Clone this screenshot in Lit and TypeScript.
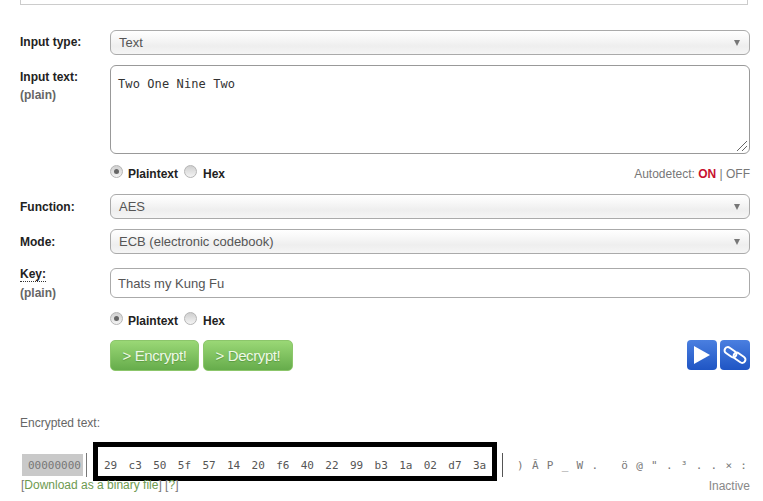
import { LitElement, html, css } from "lit";
import { customElement } from "lit/decorators.js";

const HEX = "29 c3 50 5f 57 14 20 f6 40 22 99 b3 1a 02 d7 3a".split(" ");
const ASCII = [")", "Ã", "P", "_", "W", ".", " ", "ö", "@", "\"", ".", "³", ".", ".", "×", ":"];

@customElement("app-root")
export class AppRoot extends LitElement {
  static styles = css`
    :host { display: block; width: 763px; height: 501px; overflow: hidden; background: #fff;
      font-family: "Liberation Sans", Arial, sans-serif; font-size: 12px; color: #555; }
    .page { padding: 0 13px 0 20px; }
    .topbox { height: 4px; border: 1px solid #ccc; border-top: 0; margin-right: 2px; }
    .row { display: grid; grid-template-columns: 90px 1fr; }
    .label { font-weight: bold; color: #222; font-size: 12px; line-height: 15px; }
    .label small { display: block; font-size: 12px; color: #666; line-height: 15px; margin-top: 3px; }
    .label .key { border-bottom: 1px dotted #333; display: inline-block; line-height: 14px; }
    .pt5 { padding-top: 5px; }
    .pt6 { padding-top: 6px; }
    .keylabel { margin-top: -1px; }
    .keylabel small { margin-top: 4px; }
    .sel { height: 25px; box-sizing: border-box; border: 1px solid #aaa; border-radius: 6px;
      background: linear-gradient(#fff 0%, #f8f8f8 30%, #eee 65%, #f5f5f5 100%);
      display: flex; align-items: center; justify-content: space-between; padding: 0 9px 0 8px;
      font-size: 13px; color: #555; }
    .caret { width: 0; height: 0; border-left: 3.5px solid transparent; border-right: 3.5px solid transparent;
      border-top: 6px solid #777; }
    .ta { height: 89px; box-sizing: border-box; border: 1px solid #999; border-radius: 6px; padding: 11px 7px;
      font-family: "DejaVu Sans Mono", monospace; font-size: 12px; letter-spacing: 0.1px; color: #333; line-height: 14px;
      display: flex; flex-direction: column; justify-content: space-between; }
    .grip { align-self: flex-end; margin: 0 -6px -10px 0; display: block; }
    .inp { height: 30px; box-sizing: border-box; border: 1px solid #aaa; border-radius: 6px; padding: 0 7px;
      display: flex; align-items: center; font-size: 13px; color: #555; }
    .radios { display: flex; align-items: center; font-weight: bold; color: #222; font-size: 12px; height: 15px; }
    .radio { width: 13px; height: 13px; box-sizing: border-box; border-radius: 50%; border: 1px solid #b5b5b5; margin-top: -5px;
      background: linear-gradient(#cfcfcf, #f4f4f4); display: flex; align-items: center; justify-content: center; }
    .radio.on::after { content: ""; width: 5px; height: 5px; border-radius: 50%; background: #666; }
    .radio.p { margin-right: 5px; }
    .radio.h { margin: -5px 6px 0 6px; }
    .auto { margin-left: auto; font-weight: normal; color: #777; }
    .auto b { color: #c8102e; }
    .btnrow { display: flex; align-items: flex-start; }
    .btn { height: 31px; box-sizing: border-box; border-radius: 5px; border: 1px solid #8cc66b;
      background: linear-gradient(#9ad876, #66ac4b); color: #eef9e6; font-size: 15px; letter-spacing: -0.4px;
      display: flex; align-items: center; justify-content: center; text-shadow: 0 1px 1px #5a9a42; }
    .enc { width: 89px; margin-right: 4px; }
    .dec { width: 90px; }
    .ico { width: 30px; height: 30px; border-radius: 4px; background: linear-gradient(#4a7fe0, #1f55c4); display: flex;
      align-items: center; justify-content: center; }
    .ico + .ico { margin-left: 3px; }
    .ico.first { margin-left: auto; }
    .etitle { margin-top: 45px; color: #666; font-size: 12px; line-height: 15px; }
    .hexrow { display: flex; align-items: center; margin-top: 11px; height: 39px; width: 743px;
      font-family: "DejaVu Sans Mono", monospace; font-size: 11px; color: #555; }
    .hexrow > * { flex: none; }
    .offset { margin: 7px 0 0 2px; width: 61px; height: 22px; box-sizing: border-box; padding-left: 6px;
      background: #c9c9c9; color: #777; display: flex; align-items: center; }
    .bar { width: 1px; height: 24px; background: #777; margin: 7px 6px 0 3px; }
    .black { width: 404px; height: 39px; box-sizing: border-box; border: 5px solid #000;
      display: flex; align-items: center; padding: 7px 0 0 6px; }
    .black span { width: 24.6px; flex: none; }
    .sep { width: 1px; height: 24px; background: #555; margin: 7px 14px 0 5px; }
    .ascii { display: flex; margin-top: 7px; color: #777; width: 232px; }
    .ascii span { width: 14.9px; flex: none; white-space: pre; }
    .foot { display: flex; justify-content: space-between; font-size: 12px; line-height: 14px; color: #777; margin-top: -3px; padding-left: 1px; }
    .foot i { font-style: normal; color: #6d9a50; }
    .foot .in { color: #888; margin-top: 1px; }
  `;

  render() {
    return html`<div class="page">
      <div class="topbox"></div>
      <div class="row" style="margin-top:25px">
        <div class="label pt5">Input type:</div>
        <div class="sel"><span>Text</span><span class="caret"></span></div>
      </div>
      <div class="row" style="margin-top:10px">
        <div class="label pt5">Input text:<small>(plain)</small></div>
        <div class="ta"><span>Two One Nine Two</span>
          <svg class="grip" width="12" height="12" viewBox="0 0 12 12"><path d="M1 11 11 1M6 11 11 6" stroke="#666" stroke-width="1" fill="none"/></svg>
        </div>
      </div>
      <div class="row" style="margin-top:12px">
        <div></div>
        <div class="radios"><span class="radio p on"></span>Plaintext<span class="radio h"></span>Hex
          <span class="auto">Autodetect: <b>ON</b> | OFF</span></div>
      </div>
      <div class="row" style="margin-top:13px">
        <div class="label pt6">Function:</div>
        <div class="sel"><span>AES</span><span class="caret"></span></div>
      </div>
      <div class="row" style="margin-top:10px">
        <div class="label pt6">Mode:</div>
        <div class="sel"><span>ECB (electronic codebook)</span><span class="caret"></span></div>
      </div>
      <div class="row" style="margin-top:14px">
        <div class="label keylabel"><span class="key">Key:</span><small>(plain)</small></div>
        <div class="inp">Thats my Kung Fu</div>
      </div>
      <div class="row" style="margin-top:12px">
        <div></div>
        <div class="radios"><span class="radio p on"></span>Plaintext<span class="radio h"></span>Hex</div>
      </div>
      <div class="row" style="margin-top:12px">
        <div></div>
        <div class="btnrow">
          <div class="btn enc">&gt; Encrypt!</div>
          <div class="btn dec">&gt; Decrypt!</div>
          <div class="ico first"><svg width="16" height="18" viewBox="0 0 16 18"><path d="M0 0 16 9 0 18Z" fill="#fff"/></svg></div>
          <div class="ico"><svg width="26" height="26" viewBox="0 0 26 26" fill="none" stroke="#fff" stroke-width="2"><rect x="2" y="7" width="13" height="6.5" rx="3.2" transform="rotate(35 8.5 10.25)"/><rect x="11" y="12.5" width="13" height="6.5" rx="3.2" transform="rotate(35 17.5 15.75)"/></svg></div>
        </div>
      </div>
      <div class="etitle">Encrypted text:</div>
      <div class="hexrow">
        <div class="offset">00000000</div>
        <div class="bar"></div>
        <div class="black">${HEX.map((h) => html`<span>${h}</span>`)}</div>
        <div class="sep"></div>
        <div class="ascii">${ASCII.map((c) => html`<span>${c}</span>`)}</div>
      </div>
      <div class="foot"><span>[<i>Download as a binary file</i>] [<i>?</i>]</span><span class="in">Inactive</span></div>
    </div>`;
  }
}
